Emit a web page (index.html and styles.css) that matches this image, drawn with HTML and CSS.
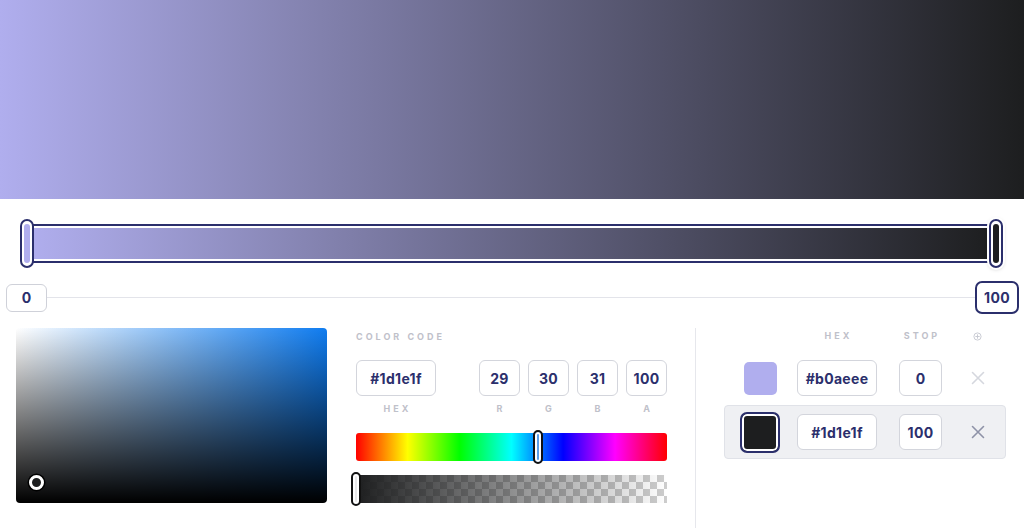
FILE: index.html
```html
<!DOCTYPE html>
<html>
<head>
<meta charset="utf-8">
<link rel="stylesheet" href="styles.css">
</head>
<body>
<div class="preview"></div>

<div class="track">
  <div class="bar"></div>
  <div class="handle handle-start"><span class="knob knob-light"></span></div>
  <div class="handle handle-end"><span class="knob knob-dark"></span></div>
</div>

<div class="stop-row">
  <div class="num">0</div>
  <div class="line"></div>
  <div class="num num-active">100</div>
</div>

<div class="editor">
  <div class="picker">
    <span class="cursor"></span>
  </div>

  <div class="code">
    <div class="label label-top">COLOR CODE</div>
    <div class="code-inputs">
      <div class="field">
        <div class="box box-hex">#1d1e1f</div>
        <div class="label">HEX</div>
      </div>
      <div class="rgba">
        <div class="field"><div class="box box-sm">29</div><div class="label">R</div></div>
        <div class="field"><div class="box box-sm">30</div><div class="label">G</div></div>
        <div class="field"><div class="box box-sm">31</div><div class="label">B</div></div>
        <div class="field"><div class="box box-sm">100</div><div class="label">A</div></div>
      </div>
    </div>
    <div class="hue">
      <span class="slider-handle hue-handle"></span>
    </div>
    <div class="alpha">
      <div class="alpha-fill"></div>
      <span class="slider-handle alpha-handle"></span>
    </div>
  </div>

  <div class="divider"></div>

  <div class="stops">
    <div class="row row-head">
      <div class="c-swatch"></div>
      <div class="c-hex label">HEX</div>
      <div class="c-stop label">STOP</div>
      <div class="c-del">
        <svg width="9" height="9" viewBox="0 0 10 10"><circle cx="5" cy="5" r="4" fill="none" stroke="#c4c6cf" stroke-width="1"/><path d="M5 2.6v4.8M2.6 5h4.8" stroke="#c4c6cf" stroke-width="1"/></svg>
      </div>
    </div>
    <div class="row">
      <div class="c-swatch"><span class="swatch swatch-light"></span></div>
      <div class="c-hex"><div class="box box-stophex">#b0aeee</div></div>
      <div class="c-stop"><div class="box box-stop">0</div></div>
      <div class="c-del">
        <svg width="14" height="14" viewBox="0 0 14 14"><path d="M1.5 1.5l11 11M12.5 1.5l-11 11" stroke="#d5d7de" stroke-width="1.6" stroke-linecap="round"/></svg>
      </div>
    </div>
    <div class="row row-active">
      <div class="c-swatch"><span class="swatch swatch-dark"></span></div>
      <div class="c-hex"><div class="box box-stophex">#1d1e1f</div></div>
      <div class="c-stop"><div class="box box-stop">100</div></div>
      <div class="c-del">
        <svg width="14" height="14" viewBox="0 0 14 14"><path d="M1.5 1.5l11 11M12.5 1.5l-11 11" stroke="#8e92a7" stroke-width="1.6" stroke-linecap="round"/></svg>
      </div>
    </div>
  </div>
</div>
</body>
</html>
```

FILE: styles.css
```css
* { box-sizing: border-box; }

html, body {
  margin: 0;
  padding: 0;
  background: #ffffff;
  font-family: Inter, "Noto Sans", "Liberation Sans", sans-serif;
  color: #2b2f6c;
  overflow: hidden;
}

.preview {
  height: 199px;
  background: linear-gradient(to right, #b0aeee, #1d1e1f);
}

/* gradient track */
.track {
  position: relative;
  margin: 25px 28px 0 27px;
  height: 39px;
}

.bar {
  height: 39px;
  border: 2px solid #2b2f6c;
  box-shadow: inset 0 0 0 2px #ffffff;
  background: linear-gradient(to right, #b0aeee, #1d1e1f);
  background-clip: padding-box;
}

.handle {
  position: absolute;
  top: -5px;
  width: 14px;
  height: 49px;
  border: 2px solid #2b2f6c;
  border-radius: 7px;
  background: #ffffff;
  padding: 3px 2px;
}

.handle-start { left: -7px; }
.handle-end {
  right: -7px;
  box-shadow: 0 0 0 2px #ffffff, 0 1px 4px rgba(0, 0, 0, 0.25);
}

.knob {
  display: block;
  height: 100%;
  border-radius: 3px;
}
.knob-light { background: #b0aeee; }
.knob-dark { background: #1d1e1f; }

/* stop position row */
.stop-row {
  display: flex;
  align-items: center;
  margin: 18px 5px 0 6px;
  height: 33px;
}

.line {
  flex: 1;
  height: 1px;
  background: #e3e4ea;
}

.num {
  width: 41px;
  height: 28px;
  border: 1px solid #cfd1d9;
  border-radius: 6px;
  display: flex;
  align-items: center;
  justify-content: center;
  font-size: 14px;
  font-weight: 700;
  letter-spacing: 0.3px;
  color: #2b2f6c;
}

.num-active {
  width: 44px;
  height: 33px;
  border: 2px solid #2b2f6c;
  border-radius: 7px;
}

/* editor */
.editor {
  display: flex;
  margin-top: 14px;
  padding-left: 16px;
  height: 200px;
}

.picker {
  position: relative;
  width: 311px;
  height: 175px;
  border-radius: 4px;
  background:
    linear-gradient(to top, #000000, rgba(0, 0, 0, 0)),
    linear-gradient(to right, #ffffff, #0f7cf0);
}

.cursor {
  position: absolute;
  left: 13px;
  top: 147px;
  width: 15px;
  height: 15px;
  border-radius: 50%;
  border: 3px solid #ffffff;
  box-shadow: 0 0 0 1.5px #000000;
  background: #1d1e1f;
}

.code {
  width: 311px;
  margin-left: 29px;
  padding-top: 3px;
}

.label {
  font-size: 9px;
  line-height: 12px;
  font-weight: 700;
  letter-spacing: 3px;
  color: #bfc1ca;
  text-align: center;
  text-indent: 3px;
}

.label-top {
  text-align: left;
  text-indent: 0;
}

.code-inputs {
  display: flex;
  justify-content: space-between;
  margin-top: 17px;
}

.rgba {
  display: flex;
  gap: 8px;
}

.field .label {
  margin-top: 7px;
}

.box {
  height: 36px;
  border: 1px solid #d3d5dc;
  border-radius: 6px;
  display: flex;
  align-items: center;
  justify-content: center;
  font-size: 14px;
  font-weight: 700;
  letter-spacing: 0.3px;
  color: #2b2f6c;
  background: #ffffff;
}

.box-hex { width: 80px; }
.box-sm { width: 41px; }

.hue {
  position: relative;
  margin-top: 18px;
  height: 28px;
  border-radius: 3px;
  background: linear-gradient(to right,
    #ff0000 0%, #ffff00 16.6%, #00ff00 33.3%, #00ffff 50%,
    #0000ff 66.6%, #ff00ff 83.3%, #ff0000 100%);
}

.alpha {
  position: relative;
  margin-top: 14px;
  height: 28px;
  background-color: #ffffff;
  background-image:
    linear-gradient(45deg, #cdcdcd 25%, transparent 25%, transparent 75%, #cdcdcd 75%),
    linear-gradient(45deg, #cdcdcd 25%, transparent 25%, transparent 75%, #cdcdcd 75%);
  background-size: 14px 14px;
  background-position: 0 0, 7px 7px;
}

.alpha-fill {
  height: 100%;
  background: linear-gradient(to right, #1d1e1f, rgba(29, 30, 31, 0));
}

.slider-handle {
  position: absolute;
  top: -3px;
  width: 10px;
  height: 34px;
  border: 2px solid #111111;
  border-radius: 5px;
  box-shadow: inset 0 0 0 2px #ffffff;
}

.hue-handle {
  left: 177px;
  background: #5a9de8;
}

.alpha-handle {
  left: -5px;
  background: #e8e8ea;
}

.divider {
  width: 1px;
  margin: 0 28px;
  background: #e6e7ec;
}

/* stops table */
.stops {
  width: 282px;
  padding-top: 2px;
}

.row {
  display: flex;
  align-items: center;
  height: 54px;
  padding: 0 0 0 15px;
  border: 1px solid transparent;
  border-radius: 4px;
}

.row-head {
  height: 12px;
  border: none;
  padding-left: 16px;
  margin-bottom: 9px;
}

.row-active {
  background: #eff0f3;
  border-color: #e0e2e8;
}

.c-swatch {
  width: 40px;
  display: flex;
  justify-content: center;
}

.c-hex {
  width: 80px;
  margin-left: 17px;
}

.c-stop {
  width: 43px;
  margin-left: 22px;
}

.c-del {
  width: 35px;
  margin-left: 18px;
  display: flex;
  justify-content: center;
  align-items: center;
}

.swatch {
  display: block;
  border-radius: 5px;
}

.swatch-light {
  width: 33px;
  height: 33px;
  background: #b0aeee;
}

.swatch-dark {
  width: 41px;
  height: 41px;
  background: #1d1e1f;
  border: 2px solid #2b2f6c;
  box-shadow: inset 0 0 0 2px #ffffff;
  border-radius: 7px;
}

.box-stophex { width: 80px; }
.box-stop { width: 43px; }
```
